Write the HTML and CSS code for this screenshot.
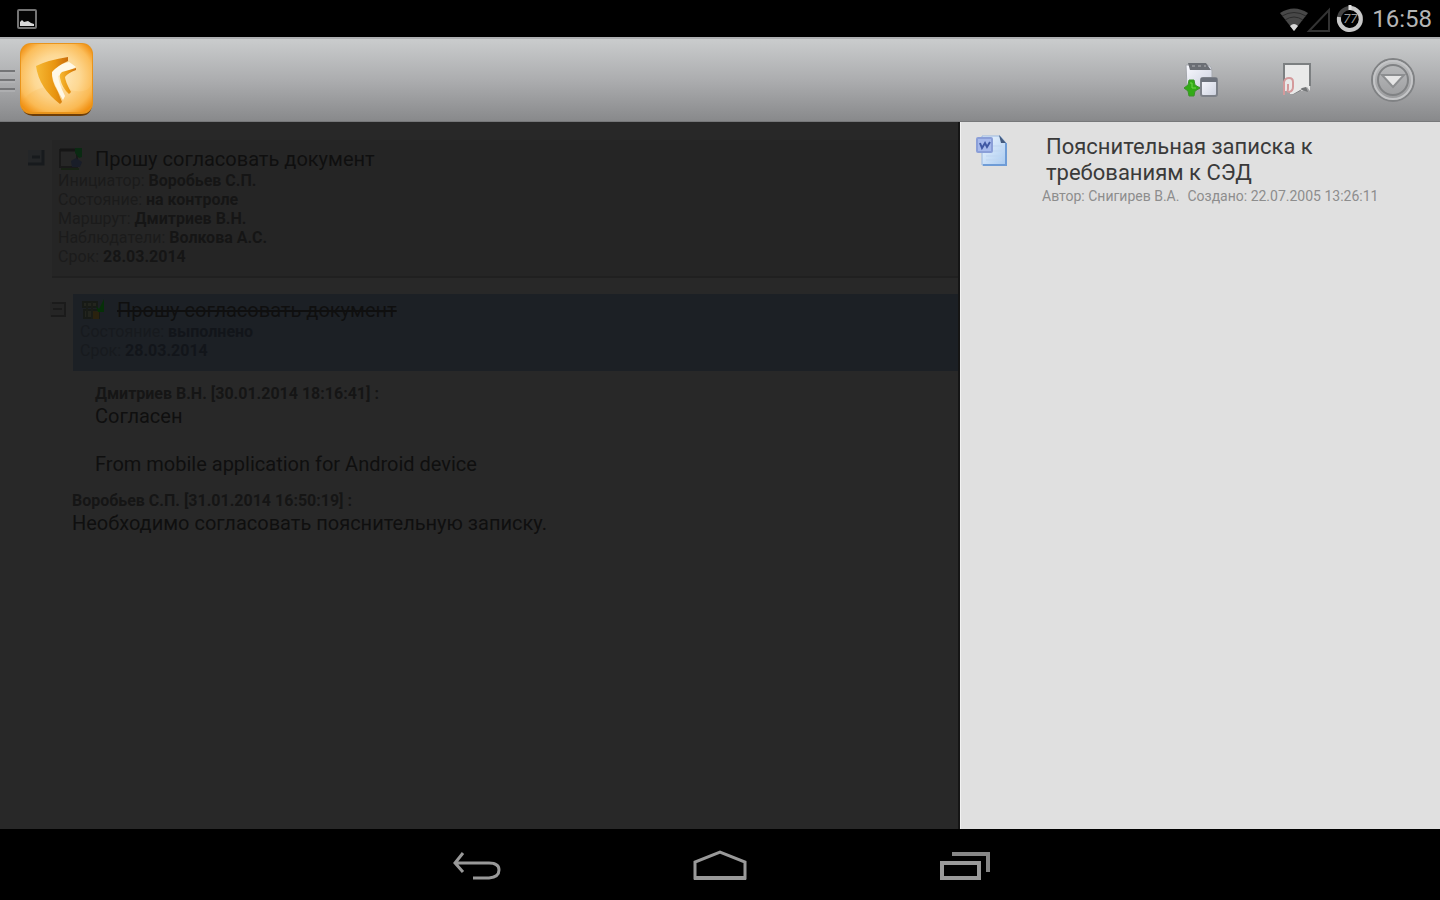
FILE: index.html
```html
<!DOCTYPE html>
<html lang="ru">
<head>
<meta charset="utf-8">
<title>Согласование документа</title>
<link rel="stylesheet" href="styles.css">
</head>
<body>
<div class="screen">
  <header class="status">
    <svg width="20" height="20" viewBox="0 0 20 20" aria-hidden="true">
      <rect x="1" y="1" width="18" height="18" rx="1" fill="#050505" stroke="#747474" stroke-width="2"/>
      <path d="M3 17v-4l2-2 2 2 4-1 3 2 3 1v2z" fill="#dadada"/>
    </svg>
    <div class="status-right">
      <svg width="52" height="30" viewBox="0 0 52 30" aria-hidden="true">
        <path d="M0 9Q14 0 28 9L14 27z" fill="#484848"/>
        <path d="M2 12Q14 5 26 12M5 16Q14 10 23 16" fill="none" stroke="#2b2b2b"/>
        <path d="M10 22Q14 18 18 22L14 27z" fill="#d8d8d8"/>
        <path d="M29 27L49 6V27z" fill="none" stroke="#333" stroke-width="2"/>
      </svg>
      <span class="battery">
        <svg width="28" height="28" viewBox="0 0 28 28" aria-hidden="true">
          <circle cx="14" cy="14" r="11" fill="none" stroke="#444" stroke-width="4"/>
          <path d="M14 3A11 11 0 1 1 3 12" fill="none" stroke="#c8c8c8" stroke-width="4"/>
          <path d="M14 0v5" stroke="#e2e2e2" stroke-width="3"/>
        </svg>
        <span class="battery-level">77</span>
      </span>
      <time class="clock">16:58</time>
    </div>
  </header>

  <div class="toolbar">
    <button class="home" aria-label="Меню">
      <svg width="15" height="24" viewBox="0 0 15 24"><path d="M0 3h15M0 12h15M0 21h15" stroke="#747577" stroke-width="2"/><path d="M0 5h15M0 14h15M0 23h15" stroke="#b8b9bb"/></svg>
      <svg width="76" height="76" viewBox="0 0 76 76">
        <defs>
          <radialGradient id="tile" cx="50%" cy="48%" r="65%">
            <stop offset="0" stop-color="#ffedc4"/><stop offset=".5" stop-color="#fdd893"/><stop offset=".8" stop-color="#fbbd5a"/><stop offset="1" stop-color="#f08c0c"/>
          </radialGradient>
          <linearGradient id="mark" x1="0" y1="0" x2="1" y2="0">
            <stop offset="0" stop-color="#f6b935"/><stop offset=".6" stop-color="#e8940f"/><stop offset="1" stop-color="#c96c0c"/>
          </linearGradient>
        </defs>
        <path d="M2 60h71v3Q72 74 61 74H14Q3 73 2 62z" fill="#6d3d08"/>
        <rect x="1" y="1" width="73" height="71" rx="11" fill="#e8941c"/>
        <rect x="2" y="2" width="71" height="68" rx="10" fill="url(#tile)"/>
        <path d="M2 60Q20 38 48 47T73 31V60Q73 70 63 70H13Q2 70 2 60z" fill="#f9a72c" opacity=".15"/>
        <path d="M50 20Q36 23 33 30 33 40 44 58L46 54Q40 42 39 34L57 25 53 22z" fill="#fff8e6"/>
        <path d="M49 15Q29 18 17 24 20 46 41 62L43 60 39 50Q32 38 33 30 38 24 49 19z" fill="url(#mark)"/>
        <path d="M57 26L43 30Q40 32 41 36 43 46 50 52L52 50Q46 39 46 35 49 31 57 28z" fill="url(#mark)"/>
      </svg>
    </button>
    <div class="actions">
      <button class="action" aria-label="Добавить">
        <svg width="36" height="36" viewBox="0 0 36 36">
          <defs><linearGradient id="card" x2="1" y2="1"><stop stop-color="#fafaff"/><stop offset="1" stop-color="#ccd1df"/></linearGradient></defs>
          <path d="M3 3h22q4 1 4 6v16H4z" fill="url(#card)" stroke="#a5a8ad"/>
          <path d="M5 1h18l5 7H7z" fill="#6b6e74"/>
          <path d="M9 4h3M15 4h3M21 4h2" stroke="#8e9095" stroke-width="2"/>
          <rect x="18" y="16" width="16" height="18" rx="2" fill="url(#card)" stroke="#7d8189" stroke-width="2"/>
          <path d="M18 18h16" stroke="#6c717b" stroke-width="4"/>
          <path d="M6 18h5l1 5 5 3-5 3-1 5H6l-1-5-4-3 4-3z" fill="#32ab16" stroke="#3b9329"/>
          <path d="M7 21h2v5h4" fill="none" stroke="#71d64d"/>
        </svg>
      </button>
      <button class="action" aria-label="Вложения">
        <svg width="36" height="36" viewBox="0 0 36 36">
          <path d="M5 2H31V29L28 25 23 29H5z" fill="#e9e9e9"/>
          <path d="M5 27V2H31V24" fill="none" stroke="#7c7f81" stroke-width="2"/>
          <path d="M13 33l10-7 4-1 2 5-6-2z" fill="#727476"/>
          <path d="M11 27h12l-9 5h-3z" fill="#e9e9e9"/>
          <path d="M5 33V20q1-4 5-4t4 4v5q0 4-4 5-2 0-1-3v-5" fill="none" stroke="#d49a9c" stroke-width="2"/>
        </svg>
      </button>
      <button class="action" aria-label="Ещё">
        <svg width="46" height="46" viewBox="0 0 46 46">
          <circle cx="23" cy="23" r="21" fill="none" stroke="#808284" stroke-width="2"/>
          <circle cx="23" cy="23" r="19" fill="none" stroke="#c4c5c7" stroke-width="2"/>
          <circle cx="23" cy="23" r="15" fill="none" stroke="#808284" stroke-width="2"/>
          <path d="M12 18H34L23 30z" fill="#e6e6e6" stroke="#8d8f91" stroke-width="2"/>
        </svg>
      </button>
    </div>
  </div>

  <div class="content">
    <main class="tasks">
      <section class="node">
        <button class="fold" aria-label="Свернуть"><svg width="18" height="18" viewBox="0 0 18 18"><path d="M1 1h16v15H1z" fill="#242628"/><path d="M5 8h8M1 15h15V1" fill="none" stroke="#171a1d" stroke-width="3"/></svg></button>
        <article class="task">
          <h2 class="task-title">
            <svg width="26" height="24" viewBox="0 0 26 24" aria-hidden="true"><path d="M2 3h17v17H2z" fill="#262626" stroke="#191919" stroke-width="2"/><path d="M2 3h17" stroke="#151515" stroke-width="3"/><path d="M17 1h7v9l-3 1-4-5z" fill="#0a2a12"/><path d="M13 14l5-3 6 4-2 5h-8z" fill="#191d28"/><path d="M3 22h18" stroke="#182215" stroke-width="2"/></svg>
            Прошу согласовать документ
          </h2>
          <dl class="facts">
            <div><dt>Инициатор:</dt> <dd>Воробьев С.П.</dd></div>
            <div><dt>Состояние:</dt> <dd>на контроле</dd></div>
            <div><dt>Маршрут:</dt> <dd>Дмитриев В.Н.</dd></div>
            <div><dt>Наблюдатели:</dt> <dd>Волкова А.С.</dd></div>
            <div><dt>Срок:</dt> <dd>28.03.2014</dd></div>
          </dl>
        </article>
      </section>
      <section class="node node-child">
        <button class="fold" aria-label="Свернуть"><svg width="18" height="18" viewBox="0 0 18 18"><path d="M1 1h16v15H1z" fill="#252525"/><path d="M3 2h12M4 8h9M2 15h14V1" fill="none" stroke="#1b1b1b" stroke-width="2"/></svg></button>
        <article class="task task-done">
          <h2 class="task-title">
            <svg width="26" height="24" viewBox="0 0 26 24" aria-hidden="true"><path d="M3 4h14v5H3zM4 12h15v8H4z" fill="#23251e" stroke="#171a16" stroke-width="2"/><path d="M16 8l3 3 5-10v13h-6z" fill="#063008"/><path d="M13 13l6 1v7h-6z" fill="#2a220e"/><path d="M7 5v14M12 4v17" stroke="#191c17" stroke-width="2"/></svg>
            <s>Прошу согласовать документ</s>
          </h2>
          <dl class="facts">
            <div><dt>Состояние:</dt> <dd>выполнено</dd></div>
            <div><dt>Срок:</dt> <dd>28.03.2014</dd></div>
          </dl>
        </article>
      </section>
      <section class="comment comment-reply">
        <h3 class="comment-head">Дмитриев В.Н. [30.01.2014 18:16:41] :</h3>
        <p class="comment-text">Согласен<br><br>From mobile application for Android device</p>
      </section>
      <section class="comment">
        <h3 class="comment-head">Воробьев С.П. [31.01.2014 16:50:19] :</h3>
        <p class="comment-text">Необходимо согласовать пояснительную записку.</p>
      </section>
    </main>

    <aside class="files">
      <article class="file">
        <svg width="34" height="34" viewBox="0 0 34 34" aria-hidden="true">
          <defs><linearGradient id="page" x2="1" y2="1"><stop stop-color="#eff7ff"/><stop offset="1" stop-color="#a9caf0"/></linearGradient></defs>
          <path d="M7 2h18l6 7v22H7z" fill="url(#page)" stroke="#9ab8e0"/>
          <path d="M24 1l7 8h-5z" fill="#435a7e"/>
          <path d="M31 9v22H8" fill="none" stroke="#6f9cd6" stroke-width="2"/>
          <path d="M18 12h9M18 17h9M11 22h16M11 26h16" stroke="#bfd5f0"/>
          <rect x="2" y="4" width="15" height="14" rx="1" fill="#a6b9ec" stroke="#8b9fd8" stroke-width="2"/>
          <path d="M5 9l2 5 3-5 2 4 3-5" fill="none" stroke="#4058a4" stroke-width="2"/>
        </svg>
        <div class="file-body">
          <h2 class="file-title">Пояснительная записка к требованиям к СЭД</h2>
          <p class="file-meta"><span>Автор: Снигирев В.А.</span><span>Создано: 22.07.2005 13:26:11</span></p>
        </div>
      </article>
    </aside>
  </div>

  <nav class="navbar">
    <button class="nav" aria-label="Назад"><svg width="56" height="36" viewBox="0 0 56 36"><path d="M15 5L7 15l8 9M7 15H41Q51 15 51 22T41 30H25" fill="none" stroke="#999" stroke-width="3"/></svg></button>
    <button class="nav" aria-label="Домой"><svg width="56" height="36" viewBox="0 0 56 36"><path d="M3 30V14L28 4l25 10v16z" fill="none" stroke="#999" stroke-width="3"/><path d="M2 30h52" stroke="#999" stroke-width="4"/></svg></button>
    <button class="nav" aria-label="Недавние"><svg width="56" height="36" viewBox="0 0 56 36"><path d="M6 15H43V30H6z" fill="none" stroke="#999" stroke-width="4"/><path d="M16 6H52V24" fill="none" stroke="#868686" stroke-width="4"/></svg></button>
  </nav>
</div>
</body>
</html>
```

FILE: styles.css
```css
* { box-sizing: border-box; }

body {
  margin: 0;
  background: #000;
  color: #0f0f0f;
  font-family: Roboto, "Liberation Sans", sans-serif;
}

h2, h3, p, dl, dd { margin: 0; font-weight: 400; }

button {
  display: flex;
  align-items: center;
  padding: 0;
  border: 0;
  background: none;
}

svg { display: block; flex: none; }

.screen { display: flex; flex-direction: column; min-height: 100vh; }

.status {
  display: flex;
  align-items: center;
  justify-content: space-between;
  height: 37px;
  padding: 0 8px 0 17px;
}

.status-right { display: flex; align-items: center; gap: 4px; }

.battery { display: grid; place-items: center; }
.battery > * { grid-area: 1 / 1; }
.battery-level { color: #999; font-size: 13px; font-style: italic; }

.clock { margin-left: 4px; color: #b5b5b5; font-size: 24px; line-height: 32px; }

.toolbar {
  display: flex;
  align-items: center;
  justify-content: space-between;
  height: 85px;
  padding-right: 24px;
  border-top: 2px solid #aeb0b2;
  border-bottom: 1px solid #77787a;
  background: linear-gradient(#cacccd, #acadaf 50%, #88898b);
}

.home { gap: 4px; }
.actions { display: flex; gap: 50px; }
.action { justify-content: center; width: 46px; height: 46px; }

.content { display: grid; grid-template-columns: 2fr 1fr; flex: 1; }

.tasks { padding-top: 18px; border-right: 2px solid #151515; background: #282828; }

.node { display: flex; align-items: flex-start; gap: 7px; padding-left: 27px; }
.node-child { padding-left: 49px; margin-top: 16px; }
.node .fold { margin-top: 9px; }
.node-child .fold { margin-top: 7px; margin-right: -1px; }

.task {
  flex: 1;
  padding: 7px 6px 10px;
  border-bottom: 2px solid #202020;
  background: #252525;
}
.task-done { padding: 4px 7px 11px; border-bottom: 0; background: #1c2025; }

.task-title { display: flex; gap: 11px; font-size: 20px; line-height: 24px; }

.facts { font-size: 16px; line-height: 19px; }
.facts dt, .facts dd { display: inline; }
.facts dt { color: #1b1b1b; }
.facts dd { color: #151515; font-weight: 700; }
.task-done .facts dt { color: #171a1e; }
.task-done .facts dd { color: #12151a; }

.comment { padding: 15px 0 0 72px; }
.comment-reply { padding-top: 13px; padding-left: 95px; }
.comment-head { color: #151515; font-size: 16px; font-weight: 700; line-height: 20px; }
.comment-text { font-size: 20px; line-height: 24px; }

.files { border-left: 1px solid #f2f2f2; background: #e0e0e0; }

.file { display: flex; align-items: flex-start; gap: 33px; padding: 12px 24px 0 14px; }
.file-body { flex: 1; }
.file-title { padding-left: 4px; color: #3a3a3a; font-size: 22px; line-height: 26px; max-width: 300px; }
.file-meta { display: flex; gap: 8px; color: #8d8d8d; font-size: 14px; line-height: 20px; white-space: nowrap; }

.navbar {
  display: flex;
  justify-content: center;
  gap: 188px;
  height: 71px;
  padding-top: 19px;
}
.nav { height: 36px; }
```
